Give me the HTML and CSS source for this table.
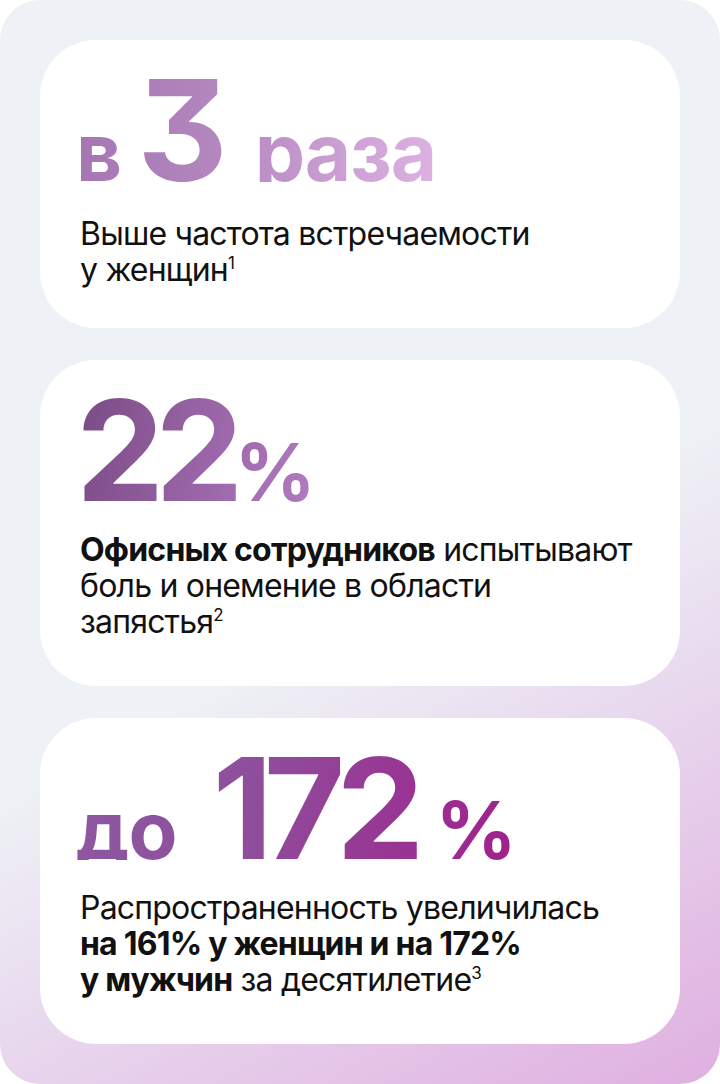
FILE: index.html
```html
<!DOCTYPE html>
<html lang="ru">
<head>
<meta charset="utf-8">
<title>Статистика</title>
<link rel="stylesheet" href="styles.css">
</head>
<body>
<main class="panel">
  <section class="card card--short">
    <div class="headline headline--soft"><span class="small">в</span><span class="big gap-s">3</span><span class="small gap-l">раза</span></div>
    <p class="text text--first">Выше частота встречаемости<br>у&nbsp;женщин<sup class="ref">1</sup></p>
  </section>
  <section class="card">
    <div class="headline headline--deep"><span class="big">22</span><span class="pct pct--tight">%</span></div>
    <p class="text"><b>Офисных сотрудников</b> испытывают<br>боль и онемение в области<br>запястья<sup class="ref">2</sup></p>
  </section>
  <section class="card">
    <div class="headline headline--magenta"><span class="small">до</span><span class="big gap-m">172</span><span class="pct">%</span></div>
    <p class="text">Распространенность увеличилась<br><b>на 161% у женщин и на 172%<br>у мужчин</b> за десятилетие<sup class="ref">3</sup></p>
  </section>
</main>
</body>
</html>
```
FILE: styles.css
```css
* { box-sizing: border-box; }

html, body {
  margin: 0;
  padding: 0;
  background: #ffffff;
}

.panel {
  width: 720px;
  height: 1084px;
  border-radius: 40px;
  padding: 40px;
  display: flex;
  flex-direction: column;
  gap: 32px;
  background: linear-gradient(152deg, #eef1f6 0%, #eef1f6 55%, #dfafe0 100%);
}

.card {
  background: #ffffff;
  border-radius: 56px;
  padding: 38px 40px 40px;
  flex: 1 1 auto;
}

.card--short {
  flex: 0 0 287px;
}

.headline {
  display: inline-block;
  vertical-align: top;
  margin-left: -4px;
  font-family: Inter, "Noto Sans", sans-serif;
  font-weight: 700;
  font-size: 80px;
  line-height: 104px;
  height: 104px;
  white-space: nowrap;
  color: transparent;
  -webkit-background-clip: text;
  background-clip: text;
  font-feature-settings: "cv09" 1;
}

.headline--soft {
  background-image: linear-gradient(90deg, #a676b3 0%, #b386bd 38%, #ddb2e2 100%);
}

.headline--deep {
  background-image: linear-gradient(100deg, #7a4b84 0%, #a36db2 70%, #b07bbf 100%);
}

.headline--magenta {
  background-image: linear-gradient(100deg, #8d58a0 0%, #8f4e9c 40%, #a0208c 100%);
}

.big {
  font-size: 140px;
  letter-spacing: -9px;
}

.small {
  font-size: 80px;
  letter-spacing: -1px;
}

.gap-s { margin-left: 16px; }
.gap-m { margin-left: 36px; }
.gap-l { margin-left: 36px; }

.pct {
  font-size: 80px;
  margin-left: 20px;
}

.pct--tight {
  margin-left: 0;
}

.text {
  margin: 30px 0 0;
  font-family: Inter, "Noto Sans", sans-serif;
  font-size: 32px;
  line-height: 36px;
  letter-spacing: -0.8px;
  color: #111111;
}

.text--first {
  margin-top: 34px;
}

.text b {
  font-weight: 700;
}

.ref {
  font-size: 17px;
  line-height: 0;
  vertical-align: 12px;
  letter-spacing: 0;
}
```
